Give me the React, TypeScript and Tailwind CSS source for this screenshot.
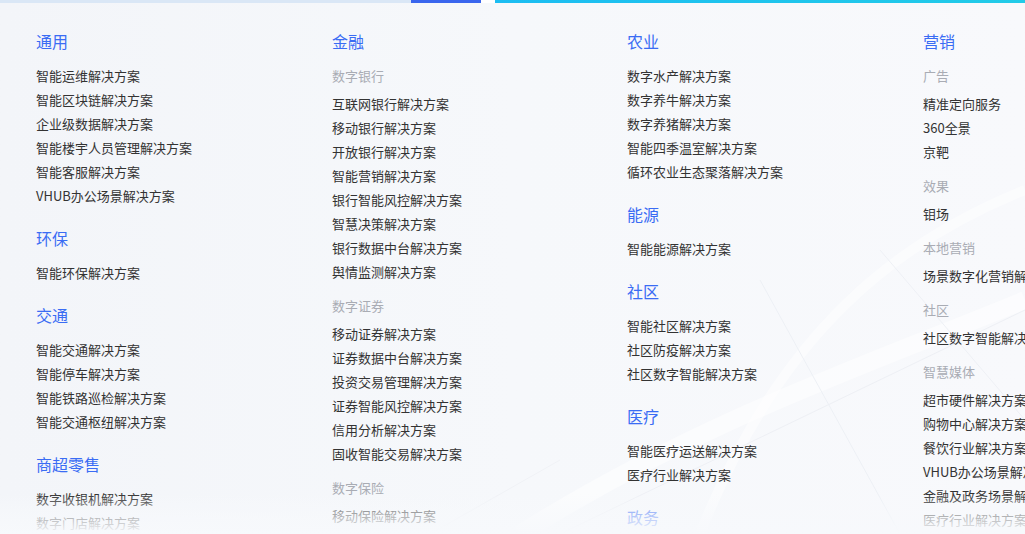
type Group = { sub?: string; items: string[] };
type Category = { title: string; groups: Group[] };

const columns: Category[][] = [
  [
    {
      title: "通用",
      groups: [
        {
          items: [
            "智能运维解决方案",
            "智能区块链解决方案",
            "企业级数据解决方案",
            "智能楼宇人员管理解决方案",
            "智能客服解决方案",
            "VHUB办公场景解决方案",
          ],
        },
      ],
    },
    { title: "环保", groups: [{ items: ["智能环保解决方案"] }] },
    {
      title: "交通",
      groups: [
        {
          items: [
            "智能交通解决方案",
            "智能停车解决方案",
            "智能铁路巡检解决方案",
            "智能交通枢纽解决方案",
          ],
        },
      ],
    },
    {
      title: "商超零售",
      groups: [{ items: ["数字收银机解决方案", "数字门店解决方案"] }],
    },
  ],
  [
    {
      title: "金融",
      groups: [
        {
          sub: "数字银行",
          items: [
            "互联网银行解决方案",
            "移动银行解决方案",
            "开放银行解决方案",
            "智能营销解决方案",
            "银行智能风控解决方案",
            "智慧决策解决方案",
            "银行数据中台解决方案",
            "舆情监测解决方案",
          ],
        },
        {
          sub: "数字证券",
          items: [
            "移动证券解决方案",
            "证券数据中台解决方案",
            "投资交易管理解决方案",
            "证券智能风控解决方案",
            "信用分析解决方案",
            "固收智能交易解决方案",
          ],
        },
        { sub: "数字保险", items: ["移动保险解决方案", "保险数据中台解决方案"] },
      ],
    },
  ],
  [
    {
      title: "农业",
      groups: [
        {
          items: [
            "数字水产解决方案",
            "数字养牛解决方案",
            "数字养猪解决方案",
            "智能四季温室解决方案",
            "循环农业生态聚落解决方案",
          ],
        },
      ],
    },
    { title: "能源", groups: [{ items: ["智能能源解决方案"] }] },
    {
      title: "社区",
      groups: [
        {
          items: ["智能社区解决方案", "社区防疫解决方案", "社区数字智能解决方案"],
        },
      ],
    },
    {
      title: "医疗",
      groups: [{ items: ["智能医疗运送解决方案", "医疗行业解决方案"] }],
    },
    { title: "政务", groups: [{ items: ["智能政务解决方案"] }] },
  ],
  [
    {
      title: "营销",
      groups: [
        { sub: "广告", items: ["精准定向服务", "360全景", "京靶"] },
        { sub: "效果", items: ["钼场"] },
        { sub: "本地营销", items: ["场景数字化营销解决方案"] },
        { sub: "社区", items: ["社区数字智能解决方案"] },
        {
          sub: "智慧媒体",
          items: [
            "超市硬件解决方案",
            "购物中心解决方案",
            "餐饮行业解决方案",
            "VHUB办公场景解决方案",
            "金融及政务场景解决方案",
            "医疗行业解决方案",
          ],
        },
      ],
    },
  ],
];

const colWidths = ["w-[296px]", "w-[295px]", "w-[296px]", "w-[296px]"];

function CategoryBlock({ cat }: { cat: Category }) {
  return (
    <div className="mb-[20px]">
      <div className="h-6 text-base leading-[21px] text-[#3a6cf4]">{cat.title}</div>
      <div className="mt-[9px] flex flex-col gap-[10px]">
        {cat.groups.map((g, i) => (
          <div key={i} className="flex flex-col">
            {g.sub && (
              <div className="mb-[4px] text-[13px] leading-6 text-[#a9acb4]">
                {g.sub}
              </div>
            )}
            {g.items.map((it) => (
              <a
                key={it}
                href="#"
                className="block whitespace-nowrap text-[13px] leading-6 text-[#333] hover:text-[#3a6cf4]"
              >
                {it}
              </a>
            ))}
          </div>
        ))}
      </div>
    </div>
  );
}

export default function App() {
  return (
    <div
      className="relative h-[534px] w-[1025px] overflow-hidden bg-gradient-to-r from-[#f3f5f9] via-[#f6f8fb] to-[#f8f9fc]"
      style={{ fontFamily: '"Noto Sans CJK SC", "Noto Sans", sans-serif' }}
    >
      {/* faint background lines */}
      <svg
        className="pointer-events-none absolute inset-0"
        width="1025"
        height="534"
        viewBox="0 0 1025 534"
        fill="none"
      >
        <path d="M1025 300 C880 360 700 420 520 534" stroke="#ffffff" strokeWidth="18" opacity="0.5" />
        <path d="M1025 190 C900 240 780 330 700 534" stroke="#ffffff" strokeWidth="10" opacity="0.45" />
        <path d="M760 280 L900 534" stroke="#edf0f5" strokeWidth="1" />
        <path d="M1025 310 L560 534" stroke="#eef0f5" strokeWidth="1" />
        <path d="M880 250 L1025 420" stroke="#eef0f5" strokeWidth="1" />
        <path d="M430 534 L560 460" stroke="#f0f2f6" strokeWidth="1" />
      </svg>

      <div className="relative flex h-[3px] w-full">
        <div className="w-[411px] bg-[#dae7f6]" />
        <div className="w-[70px] bg-[#3a66ee]" />
        <div className="w-[14px] bg-white" />
        <div className="flex-1 bg-gradient-to-r from-[#1cbdf2] to-[#22cbe8]" />
      </div>

      <div className="relative flex pl-9 pt-[28px]">
        {columns.map((col, i) => (
          <div key={i} className={`${colWidths[i]} shrink-0`}>
            {col.map((cat) => (
              <CategoryBlock key={cat.title} cat={cat} />
            ))}
          </div>
        ))}
      </div>

      <div className="pointer-events-none absolute bottom-0 left-0 h-[40px] w-full bg-gradient-to-b from-[#f7f9fc]/0 via-[#f7f9fc]/60 to-[#f7f9fc]" />
    </div>
  );
}
